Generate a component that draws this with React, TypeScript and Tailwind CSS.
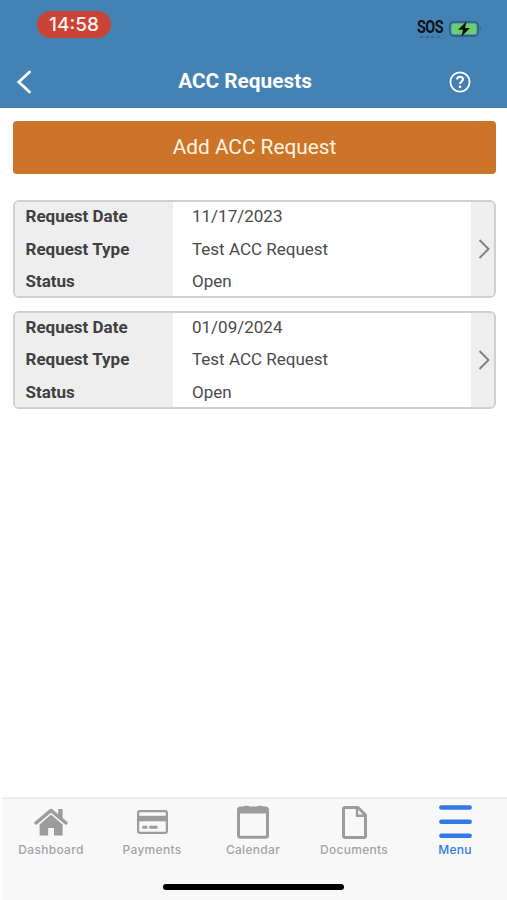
import React, { FC, ReactNode } from "react";

type Request = {
  id: number;
  date: string;
  type: string;
  status: string;
};

const requests: Request[] = [
  { id: 1, date: "11/17/2023", type: "Test ACC Request", status: "Open" },
  { id: 2, date: "01/09/2024", type: "Test ACC Request", status: "Open" },
];

const HomeIcon = () => (
  <svg width="34" height="28" viewBox="0 0 34 28" fill="none">
    <path d="M2 15 L17 2.4 L32 15" stroke="#9c9c9c" strokeWidth="3.4" strokeLinecap="round" strokeLinejoin="round" />
    <path d="M24.2 1 H28.6 V12 L24.2 8.5 Z" fill="#9c9c9c" />
    <path d="M17 6.6 L28.6 16.4 V27.5 H20 V20 H14.2 V27.5 H5.6 V16.4 Z" fill="#9c9c9c" />
  </svg>
);

const CardIcon = () => (
  <svg width="31" height="24" viewBox="0 0 31 24" fill="none">
    <rect x="1.1" y="1.1" width="28.8" height="21.8" rx="1.8" stroke="#9c9c9c" strokeWidth="2.2" />
    <path d="M1 5.8 H30 V11.3 H1 Z" fill="#9c9c9c" />
    <path d="M5.3 17.3 H10.3 M12.3 17.3 H20.5" stroke="#9c9c9c" strokeWidth="3" />
  </svg>
);

const CalendarIcon = () => (
  <svg width="32" height="34" viewBox="0 0 32 34" fill="none">
    <rect x="1.5" y="3" width="29" height="29.2" rx="2" stroke="#9c9c9c" strokeWidth="3" />
    <path d="M1.5 3 H30.5 V8.5 H1.5 Z" fill="#9c9c9c" />
    <path d="M8 2.8 H11 M21.5 2.8 H24.5" stroke="#9c9c9c" strokeWidth="4" strokeLinecap="round" />
  </svg>
);

const DocumentIcon = () => (
  <svg width="25" height="33" viewBox="0 0 25 33" fill="none" stroke="#9c9c9c" strokeWidth="3" strokeLinejoin="round">
    <path d="M3 1.5 H16 L23.5 9 V30 Q23.5 31.5 22 31.5 H3 Q1.5 31.5 1.5 30 V3 Q1.5 1.5 3 1.5 Z" />
    <path d="M15 2 V9.8 H23.5" strokeWidth="2.4" />
  </svg>
);

const MenuIcon = () => (
  <svg width="33" height="34" viewBox="0 0 33 34" stroke="#3478e5" strokeWidth="4.4" strokeLinecap="round">
    <path d="M2.3 2.5 H30.7 M2.3 16.7 H30.7 M2.3 30.8 H30.7" />
  </svg>
);

type TabProps = {
  label: string;
  active?: boolean;
  children: ReactNode;
};

const Tab: FC<TabProps> = ({ label, active, children }) => (
  <div className="flex w-[101px] flex-col items-center">
    <div className="flex h-[34px] items-center justify-center">{children}</div>
    <span
      className={`mt-[2px] font-['Inter',sans-serif] text-[12px] leading-[18px] font-medium tracking-[0.3px] ${
        active ? "text-[#3478e5]" : "text-[#a3a3a3]"
      }`}
    >
      {label}
    </span>
  </div>
);

const RequestCard: FC<{ request: Request }> = ({ request }) => (
  <div className="flex h-[98px] overflow-hidden rounded-[6px] border-2 border-[#d0d0d0] bg-white text-[17px] leading-[32.5px] text-[#4a4a4a]">
    <div className="w-[158px] bg-[#eeeeee] pl-[10.5px] font-bold text-[#404040]">
      <p className="-mt-[2px]">Request Date</p>
      <p>Request Type</p>
      <p>Status</p>
    </div>
    <div className="flex-1 pl-[19px]">
      <p className="-mt-[2px]">{request.date}</p>
      <p>{request.type}</p>
      <p>{request.status}</p>
    </div>
    <div className="flex w-[23px] items-center justify-center bg-[#eeeeee]">
      <svg className="ml-[2px]" width="12" height="20" viewBox="0 0 12 20" fill="none" stroke="#808080" strokeWidth="2">
        <path d="M1.5 1 L10.5 10 L1.5 19" />
      </svg>
    </div>
  </div>
);

const App = () => {
  return (
    <div className="flex h-[900px] w-[507px] flex-col overflow-hidden bg-white font-['Roboto',sans-serif]">
      <header className="h-[108px] bg-[#4482b4]">
        {/* Status bar */}
        <div className="flex h-[54px] items-start justify-between pt-[11px] pr-[25px] pl-[37px]">
          <span className="flex h-[27px] w-[74px] items-center justify-center rounded-full bg-[#c94437] pt-[1px] font-['Inter',sans-serif] text-[19px] font-medium text-[#fff0ea]">
            14:58
          </span>
          <div className="flex gap-[6px] pt-[5px]">
            <div className="flex w-[26px] flex-col">
              <span className="origin-left scale-x-[0.82] text-[17.5px] leading-[22px] font-bold tracking-[-0.6px] text-[#07111a]">
                SOS
              </span>
              <span className="-mt-[2px] ml-[3px] flex gap-[2.5px]">
                <i className="h-[2px] w-[3px] bg-[#376b98]" />
                <i className="h-[2px] w-[3px] bg-[#376b98]" />
                <i className="h-[2px] w-[3px] bg-[#376b98]" />
                <i className="h-[2px] w-[3px] bg-[#376b98]" />
              </span>
            </div>
            <svg className="mt-[4.5px]" width="33" height="16" viewBox="0 0 33 16" fill="none">
              <rect x="0.8" y="0.8" width="28.4" height="14.2" rx="4" stroke="#285a80" strokeWidth="1.3" />
              <rect x="2.5" y="2.5" width="25" height="10.8" rx="2.5" fill="#6bcf6b" />
              <path d="M31 5.5 Q32.5 8 31 10.5 Z" fill="#285a80" />
              <path d="M17.5 0.5 L9 8.8 H14 L12.5 15.5 L21 7 H16 Z" fill="#07100c" />
            </svg>
          </div>
        </div>
        {/* Title bar */}
        <div className="flex h-[54px] items-center justify-between pt-[1px] pr-[36px] pl-[16px] text-white">
          <svg width="16" height="24" viewBox="0 0 16 24" fill="none" stroke="white" strokeWidth="2.8" strokeLinecap="round">
            <path d="M13.5 2 L2.8 12 L13.5 22" />
          </svg>
          <h1 className="ml-[9px] text-[20.8px]  font-bold">ACC Requests</h1>
          <svg width="22" height="22" viewBox="0 0 22 22" fill="none" stroke="white" strokeWidth="1.8">
            <circle cx="11" cy="11" r="9.6" />
            <path d="M8.1 8.6 C8.1 4.8 14 4.9 14 8.3 C14 10.5 11 10.4 11 13" strokeWidth="2" />
            <circle cx="11" cy="15.8" r="1.3" fill="white" stroke="none" />
          </svg>
        </div>
      </header>

      <main className="flex-1 pt-[13px] pr-[11px] pl-[13px]">
        <button className="block h-[53px] w-full rounded-[4px] bg-[#cc7529] text-[20.8px] text-[#fff3e2]">
          Add ACC Request
        </button>
        <div className="mt-[26px] flex flex-col gap-[12.5px]">
          {requests.map((request) => (
            <RequestCard key={request.id} request={request} />
          ))}
        </div>
      </main>

      <nav className="ml-[2px] flex h-[103px] flex-col items-center justify-between border-t-2 border-[#ededed] bg-[#f8f8f8]">
        <div className="-ml-[3px] flex w-full pt-[6px]">
          <Tab label="Dashboard">
            <HomeIcon />
          </Tab>
          <Tab label="Payments">
            <CardIcon />
          </Tab>
          <Tab label="Calendar">
            <CalendarIcon />
          </Tab>
          <Tab label="Documents">
            <DocumentIcon />
          </Tab>
          <Tab label="Menu" active>
            <MenuIcon />
          </Tab>
        </div>
        {/* Home indicator */}
        <div className="mr-[2px] mb-[10px] h-[6px] w-[181px] rounded-full bg-black" />
      </nav>
    </div>
  );
};

export default App;
